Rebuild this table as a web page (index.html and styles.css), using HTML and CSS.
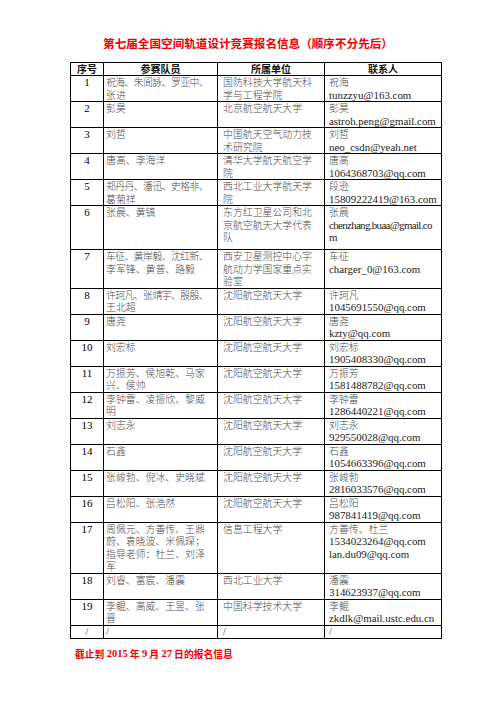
FILE: index.html
```html
<!DOCTYPE html>
<html lang="zh-CN">
<head>
<meta charset="utf-8">
<title>第七届全国空间轨道设计竞赛报名信息</title>
<link rel="stylesheet" href="styles.css">
</head>
<body>
<div class="page">
  <h1 class="title">第七届全国空间轨道设计竞赛报名信息（顺序不分先后）</h1>
  <table class="reg">
    <colgroup>
      <col class="c1"><col class="c2"><col class="c3"><col class="c4">
    </colgroup>
    <thead>
      <tr><th>序号</th><th>参赛队员</th><th>所属单位</th><th>联系人</th></tr>
    </thead>
    <tbody>
      <tr><td class="no">1</td><td class="mem"><span class="tight">祝海、朱阆詠、罗亚中、</span><br>张进</td><td class="org">国防科技大学航天科<br>学与工程学院</td><td class="con">祝海<br><span class="lat">tunzzyu@163.com</span></td></tr>
      <tr><td class="no">2</td><td class="mem">彭昊</td><td class="org">北京航空航天大学</td><td class="con">彭昊<br><span class="lat">astroh.peng@gmail.com</span></td></tr>
      <tr><td class="no">3</td><td class="mem">刘哲</td><td class="org">中国航天空气动力技<br>术研究院</td><td class="con">刘哲<br><span class="lat">neo_csdn@yeah.net</span></td></tr>
      <tr><td class="no">4</td><td class="mem">唐高、李海洋</td><td class="org">清华大学航天航空学<br>院</td><td class="con">唐高<br><span class="lat">1064368703@qq.com</span></td></tr>
      <tr><td class="no">5</td><td class="mem"><span class="tight">郑丹丹、潘迅、史格非、</span><br>葛菊祥</td><td class="org">西北工业大学航天学<br>院</td><td class="con">段逊<br><span class="lat">15809222419@163.com</span></td></tr>
      <tr class="tall"><td class="no">6</td><td class="mem">张晨、黄镐</td><td class="org">东方红卫星公司和北<br>京航空航天大学代表<br>队</td><td class="con">张晨<br><span class="lat narrow">chenzhang.buaa@gmail.co</span><br><span class="lat">m</span></td></tr>
      <tr><td class="no">7</td><td class="mem"><span class="tight">车征、黄岸毅、沈红新、</span><br>李军锋、黄普、路毅</td><td class="org">西安卫星测控中心宇<br>航动力学国家重点实<br>验室</td><td class="con">车征<br><span class="lat">charger_0@163.com</span></td></tr>
      <tr><td class="no">8</td><td class="mem"><span class="tight">许珂凡、张靖宇、殷殷、</span><br>王北超</td><td class="org">沈阳航空航天大学</td><td class="con">许珂凡<br><span class="lat">1045691550@qq.com</span></td></tr>
      <tr><td class="no">9</td><td class="mem">唐尧</td><td class="org">沈阳航空航天大学</td><td class="con">唐尧<br><span class="lat">kzty@qq.com</span></td></tr>
      <tr><td class="no">10</td><td class="mem">刘宏标</td><td class="org">沈阳航空航天大学</td><td class="con">刘宏标<br><span class="lat">1905408330@qq.com</span></td></tr>
      <tr><td class="no">11</td><td class="mem">万振芳、侯旭乾、马家<br>兴、侯帅</td><td class="org">沈阳航空航天大学</td><td class="con">万振芳<br><span class="lat">1581488782@qq.com</span></td></tr>
      <tr><td class="no">12</td><td class="mem">李钟雷、凌振欣、黎威<br>明</td><td class="org">沈阳航空航天大学</td><td class="con">李钟雷<br><span class="lat">1286440221@qq.com</span></td></tr>
      <tr><td class="no">13</td><td class="mem">刘志永</td><td class="org">沈阳航空航天大学</td><td class="con">刘志永<br><span class="lat">929550028@qq.com</span></td></tr>
      <tr><td class="no">14</td><td class="mem">石鑫</td><td class="org">沈阳航空航天大学</td><td class="con">石鑫<br><span class="lat">1054663396@qq.com</span></td></tr>
      <tr><td class="no">15</td><td class="mem">张峻勃、倪冰、史晓斌</td><td class="org">沈阳航空航天大学</td><td class="con">张峻勃<br><span class="lat">2816033576@qq.com</span></td></tr>
      <tr><td class="no">16</td><td class="mem">吕松阳、张浩然</td><td class="org">沈阳航空航天大学</td><td class="con">吕松阳<br><span class="lat">987841419@qq.com</span></td></tr>
      <tr><td class="no">17</td><td class="mem">周佩元、方善传、王鼎<br>蔚、袁晓波、米佩琛；<br>指导老师：杜兰、刘泽<br>军</td><td class="org">信息工程大学</td><td class="con">方善传、杜兰<br><span class="lat">1534023264@qq.com</span><br><span class="lat">lan.du09@qq.com</span></td></tr>
      <tr><td class="no">18</td><td class="mem">刘睿、富宸、潘震</td><td class="org">西北工业大学</td><td class="con">潘震<br><span class="lat">314623937@qq.com</span></td></tr>
      <tr><td class="no">19</td><td class="mem">李鲲、高威、王昱、张<br>晋</td><td class="org">中国科学技术大学</td><td class="con">李鲲<br><span class="lat">zkdlk@mail.ustc.edu.cn</span></td></tr>
      <tr class="slash"><td class="no">/</td><td class="mem">/</td><td class="org">/</td><td class="con">/</td></tr>
    </tbody>
  </table>
  <p class="note">截止到 <span class="num">2015</span> 年 <span class="num">9</span> 月 <span class="num">27</span> 日的报名信息</p>
</div>
</body>
</html>
```
FILE: styles.css
```css
html, body {
  margin: 0;
  padding: 0;
  background: #ffffff;
}

.page {
  width: 496px;
  padding-top: 36px;
  font-family: "Liberation Serif", "Noto Sans CJK SC", serif;
}

.title {
  margin: 0 0 12px 0;
  text-align: center;
  font-family: "Noto Sans CJK SC", sans-serif;
  font-size: 11.6px;
  line-height: 14px;
  font-weight: 700;
  color: #f00000;
}

.reg {
  margin-left: 70px;
  width: 371px;
  border-collapse: collapse;
  table-layout: fixed;
}

.c1 { width: 33px; }
.c2 { width: 114px; }
.c3 { width: 107px; }
.c4 { width: 117px; }

.reg th,
.reg td {
  border: 1px solid #000;
  vertical-align: top;
}

.reg th {
  font-family: "Noto Sans CJK SC", sans-serif;
  font-size: 10px;
  line-height: 12px;
  font-weight: 700;
  color: #111;
  text-align: center;
  padding: 0;
}

.reg td {
  font-family: "Noto Sans CJK SC", sans-serif;
  font-size: 9.9px;
  line-height: 12.5px;
  font-weight: 300;
  color: #4a4a4a;
  white-space: nowrap;
  overflow: visible;
}

.reg td.mem { padding: 0 0 0 2px; }
.reg td.org { padding: 0 0 0 5px; }
.reg td.con { padding: 0 0 0 4px; }

.reg .tight {
  letter-spacing: -0.6px;
}

.reg td.no {
  font-family: "Liberation Serif", serif;
  font-size: 11px;
  color: #000;
  font-weight: 400;
  text-align: center;
  padding: 0;
}

.reg .lat {
  font-family: "Liberation Serif", serif;
  font-size: 10.9px;
  font-weight: 400;
  color: #1a1a1a;
}

.reg .lat.narrow {
  letter-spacing: -0.65px;
}

.reg tr.tall td {
  height: 43px;
}

.reg tr.slash td {
  font-family: "Liberation Serif", serif;
  font-size: 10px;
  color: #333;
}

.note {
  margin: 9px 0 0 75px;
  font-family: "Noto Sans CJK SC", sans-serif;
  font-size: 9.8px;
  line-height: 12px;
  font-weight: 700;
  color: #f00000;
}

.note .num {
  font-family: "Liberation Serif", serif;
  font-size: 10.5px;
  vertical-align: 1px;
}
```
